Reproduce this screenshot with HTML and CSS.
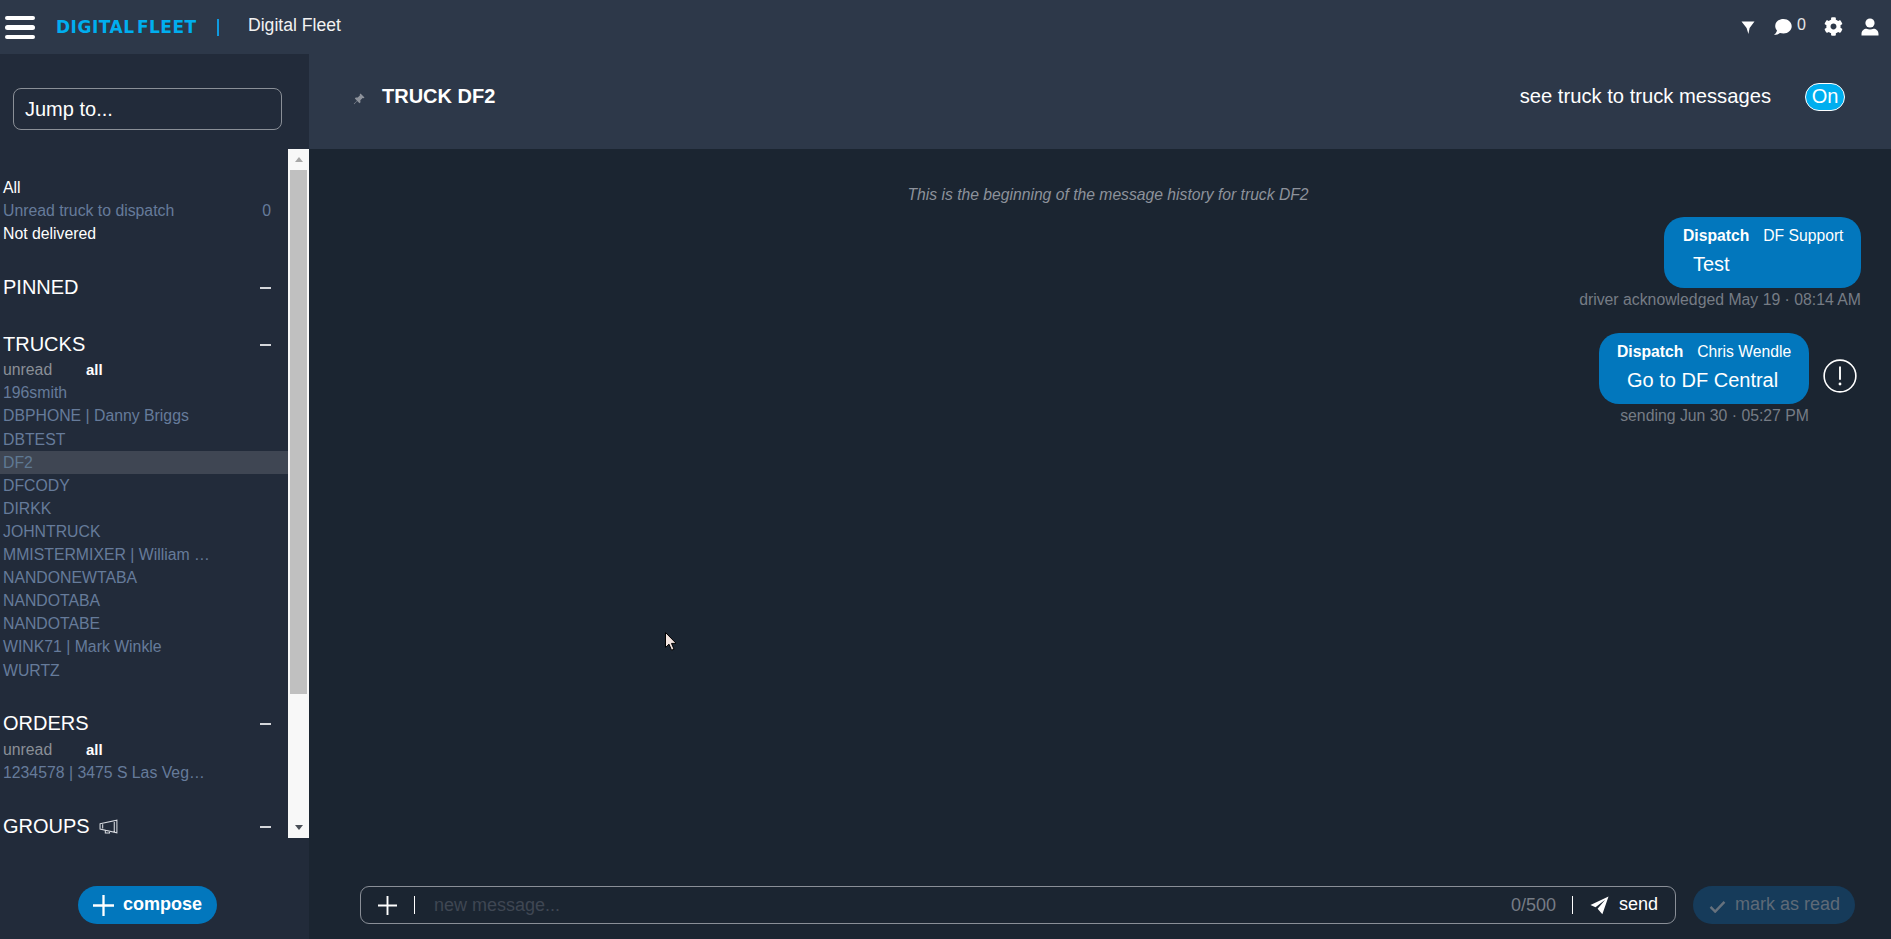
FILE: index.html
```html
<!DOCTYPE html>
<html lang="en">
<head>
<meta charset="utf-8">
<title>Digital Fleet</title>
<link rel="stylesheet" href="styles.css">
</head>
<body>
<header class="topbar">
  <div class="burger"><span></span><span></span><span></span></div>
  <div class="logo">DIGITAL FLEET</div>
  <div class="logo-sep"></div>
  <div class="app-name">Digital Fleet</div>
  <div class="top-icons">
    <svg class="ic-filter" viewBox="0 0 14 14"><path d="M0.500 1h13L8.600 7.400 7.400 13.600 5.600 7.400z" fill="#fff"/></svg>
    <svg class="ic-chat" viewBox="0 0 20 18"><path d="M10.500 1C5.800 1 2.200 4 2.200 8c0 1.800.7 3.300 1.800 4.500C3.600 14.200 2.400 15.800 1 17c2.400 0 4.600-.9 6-2 1 .3 2.200.5 3.500.5 4.600 0 8.200-3.200 8.200-7.200S15.100 1 10.500 1z" fill="#fff"/></svg>
    <span class="chat-count">0</span>
    <svg class="ic-gear" viewBox="0 0 512 512"><path fill="#fff" d="M487 316l-43-25c4-23 4-47 0-70l43-25c5-3 7-9 6-14-11-36-30-68-55-95-4-4-10-5-15-2l-43 25c-18-16-39-28-61-36V24c0-6-4-11-9-12-37-8-75-8-110 0-5 1-9 6-9 12v50c-22 8-43 20-61 36L87 85c-5-3-11-2-15 2-25 27-44 59-55 95-2 5 1 11 6 14l43 25c-4 23-4 47 0 70l-43 25c-5 3-7 9-6 14 11 36 30 68 55 95 4 4 10 5 15 2l43-25c18 16 39 28 61 36v50c0 6 4 11 9 12 37 8 75 8 110 0 5-1 9-6 9-12v-50c22-8 43-20 61-36l43 25c5 3 11 2 15-2 25-27 44-59 55-95 2-5-1-11-6-14zM256 336c-44 0-80-36-80-80s36-80 80-80 80 36 80 80-36 80-80 80z"/></svg>
    <svg class="ic-user" viewBox="0 0 18 18"><circle cx="9" cy="5" r="4.600" fill="#fff"/><path d="M0.500 17.500v-1.600C0.500 12.800 3 10.800 5.500 10.800c1 .5 2.200.8 3.500.8s2.500-.3 3.500-.8c2.500 0 5 2 5 5.100v1.600z" fill="#fff"/></svg>
  </div>
</header>
<div class="body-row">
  <aside class="sidebar">
    <div class="jump-wrap"><div class="jump">Jump to...</div></div>
    <div class="list-wrap">
      <div class="list">
        <div class="row white">All</div>
        <div class="row muted split"><span>Unread truck to dispatch</span><span>0</span></div>
        <div class="row white">Not delivered</div>

        <div class="section pinned"><span>PINNED</span><span class="dash"></span></div>

        <div class="section trucks"><span>TRUCKS</span><span class="dash"></span></div>
        <div class="row tabs"><span class="tab-off">unread</span><span class="tab-on">all</span></div>
        <div class="row muted">196smith</div>
        <div class="row muted">DBPHONE | Danny Briggs</div>
        <div class="row muted">DBTEST</div>
        <div class="row muted active">DF2</div>
        <div class="row muted">DFCODY</div>
        <div class="row muted">DIRKK</div>
        <div class="row muted">JOHNTRUCK</div>
        <div class="row muted">MMISTERMIXER | William …</div>
        <div class="row muted">NANDONEWTABA</div>
        <div class="row muted">NANDOTABA</div>
        <div class="row muted">NANDOTABE</div>
        <div class="row muted">WINK71 | Mark Winkle</div>
        <div class="row muted">WURTZ</div>

        <div class="section orders"><span>ORDERS</span><span class="dash"></span></div>
        <div class="row tabs"><span class="tab-off">unread</span><span class="tab-on">all</span></div>
        <div class="row muted">1234578 | 3475 S Las Veg…</div>

        <div class="section groups"><span class="group-label">GROUPS
          <svg class="ic-horn" viewBox="0 0 19 15"><path d="M1 4.500l16-3.500v12L1 9.500zM3.500 5v4M14.500 1.500v11M6 10.200v3h4v-2.200" fill="none" stroke="#d8dbe0" stroke-width="1"/></svg></span><span class="dash"></span></div>
      </div>
      <div class="scrollbar">
        <div class="arrow-up"></div>
        <div class="thumb"></div>
        <div class="arrow-down"></div>
      </div>
    </div>
    <div class="compose-wrap">
      <div class="compose">
        <svg class="ic-plus-lg" viewBox="0 0 22 22"><path d="M11 0v22M0 11h22" stroke="#fff" stroke-width="2.400"/></svg>
        <span>compose</span>
      </div>
    </div>
  </aside>
  <main class="main">
    <div class="main-head">
      <svg class="ic-pin" viewBox="0 0 12 12"><path d="M7.500 0.500l4 4-1 .8-.9-.3-2.300 2.300.2 2-1 .9L4.200 7.900 1.200 11.200 0.800 10.800 4 7.700 1.800 5.400l.9-1 2 .2L7 2.300l-.3-.9z" fill="#8d929b"/></svg>
      <h1 class="truck-title">TRUCK DF2</h1>
      <div class="see-label">see truck to truck messages</div>
      <div class="toggle">On</div>
    </div>
    <div class="history">
      <div class="history-note">This is the beginning of the message history for truck DF2</div>
      <div class="msg first">
        <div class="msg-main">
          <div class="bubble b1">
            <div class="b-head"><b>Dispatch</b><span>DF Support</span></div>
            <div class="b-text t1">Test</div>
          </div>
          <div class="meta">driver acknowledged May 19 · 08:14 AM</div>
        </div>
      </div>
      <div class="msg second">
        <div class="msg-main">
          <div class="bubble b2">
            <div class="b-head"><b>Dispatch</b><span>Chris Wendle</span></div>
            <div class="b-text t2">Go to DF Central</div>
          </div>
          <div class="meta">sending Jun 30 · 05:27 PM</div>
        </div>
        <svg class="ic-alert" viewBox="0 0 36 36"><circle cx="18" cy="18" r="16.800" fill="none" stroke="#fff" stroke-width="1.700"/><path d="M18 8v14" stroke="#fff" stroke-width="2"/><circle cx="18" cy="26.500" r="1.500" fill="#fff"/></svg>
      </div>
    </div>
    <div class="composer">
      <div class="input-box">
        <svg class="ic-plus" viewBox="0 0 20 20"><path d="M10 0v20M0 10h20" stroke="#fff" stroke-width="2"/></svg>
        <span class="vbar first-bar"></span>
        <span class="placeholder">new message...</span>
        <span class="counter">0/500</span>
        <span class="vbar"></span>
        <svg class="ic-send" viewBox="0 0 20 20"><path d="M19.500 0.500L0.500 9.500l5.300 2.400L16 4 8 13.500l5 5.800z" fill="#fff"/></svg>
        <span class="send-label">send</span>
      </div>
      <div class="mark-read">
        <svg class="ic-check" viewBox="0 0 18 14"><path d="M1.500 7.500l5 5L16.500 2" fill="none" stroke="#66717d" stroke-width="2.600"/></svg>
        <span>mark as read</span>
      </div>
    </div>
  </main>
</div>
<svg class="cursor" viewBox="0 0 11 19"><path d="M0.500 0.500v15l3.500-3.300 2.500 6 2.500-1-2.500-5.800h4.700z" fill="#f2e4df" stroke="#000" stroke-width="1"/></svg>
</body>
</html>
```

FILE: styles.css
```css
* { box-sizing: border-box; }
html, body { height: 100%; }
body {
  margin: 0;
  height: 939px;
  width: 1891px;
  overflow: hidden;
  display: flex;
  flex-direction: column;
  position: relative;
  font-family: "Liberation Sans", Arial, sans-serif;
  color: #fff;
  background: #1b2531;
}

/* top bar */
.topbar {
  flex: 0 0 54px;
  height: 54px;
  background: #2d3849;
  display: flex;
  align-items: center;
  padding-left: 5px;
}
.burger { width: 30px; display: flex; flex-direction: column; gap: 5px; margin-top: 1px; }
.burger span { display: block; height: 4.500px; background: #fff; border-radius: 3px; }
.logo {
  margin-left: 21px;
  width: 141px;
  font-weight: 700;
  font-size: 17px;
  font-family: "DejaVu Sans", sans-serif;
  color: #00aeef;
  white-space: nowrap;
  letter-spacing: 0.5px;
  word-spacing: -4px;
}
.logo-sep { width: 2px; height: 17px; background: #0f9be0; margin-left: 20px; }
.app-name { margin-left: 29px; font-size: 17.600px; color: #f2f2f2; margin-top: -3px; }
.top-icons { margin-left: auto; display: flex; align-items: center; padding-right: 12px; margin-top: -1px; }
.ic-filter { width: 14px; height: 15px; margin-right: 18px; margin-top: 1px; }
.ic-chat { width: 20px; height: 18px; }
.chat-count { font-size: 16px; margin-left: 4px; margin-top: -3px; color: #e6e6e6; width: 9px; }
.ic-gear { width: 19px; height: 19px; margin-left: 18px; }
.ic-user { width: 18px; height: 18px; margin-left: 18px; }

.body-row { flex: 1; display: flex; min-height: 0; }

/* sidebar */
.sidebar {
  flex: 0 0 309px;
  width: 309px;
  background: #222b3a;
  display: flex;
  flex-direction: column;
}
.jump-wrap { height: 95px; padding: 34px 27px 0 13px; }
.jump {
  height: 42px;
  border: 1px solid #8a8f97;
  border-radius: 8px;
  padding-left: 11px;
  line-height: 40px;
  font-size: 20px;
}
.list-wrap { height: 689px; display: flex; }
.list { flex: 1; min-width: 0; padding-top: 27px; overflow: hidden; }
.row {
  height: 23.100px;
  line-height: 23px;
  font-size: 15.800px;
  padding-left: 3px;
  white-space: nowrap;
}
.white { color: #fff; }
.muted { color: #667b9a; }
.split { display: flex; justify-content: space-between; padding-right: 17px; }
.active { background: #3f4653; color: #5f7993; }
.tabs { display: flex; }
.tab-off { color: #8a8f97; width: 83px; }
.tab-on { color: #fff; font-weight: 700; font-size: 15px; }
.section {
  display: flex;
  justify-content: space-between;
  align-items: center;
  font-size: 20px;
  height: 24px;
  line-height: 24px;
  padding: 0 17px 0 3px;
  color: #fff;
}
.pinned { margin-top: 30px; margin-bottom: 33px; }
.trucks { margin-bottom: 2px; }
.orders { margin-top: 29px; margin-bottom: 3px; }
.groups { margin-top: 30px; }
.dash { display: block; width: 11px; height: 2px; background: #d4d6da; margin-top: 2px; }
.group-label { display: flex; align-items: center; gap: 9px; }
.ic-horn { width: 20px; height: 16px; margin-top: 2px; }

.scrollbar {
  flex: 0 0 21px;
  width: 21px;
  background: #f8f8f8;
  display: flex;
  flex-direction: column;
  align-items: center;
  padding: 0 2px;
}
.arrow-up {
  margin-top: 8px;
  margin-bottom: 8px;
  border-left: 4.500px solid transparent;
  border-right: 4.500px solid transparent;
  border-bottom: 5px solid #a8a8a8;
}
.thumb { width: 17px; height: 524px; background: #c0c0c0; }
.arrow-down {
  margin-top: auto;
  margin-bottom: 8px;
  border-left: 4.500px solid transparent;
  border-right: 4.500px solid transparent;
  border-top: 5px solid #4a4f57;
}
.compose-wrap { flex: 1; display: flex; justify-content: center; padding-top: 48px; padding-right: 14px; }
.compose {
  height: 38px;
  width: 139px;
  border-radius: 19px;
  background: #0277bd;
  display: flex;
  align-items: center;
  padding-left: 15px;
  gap: 9px;
  font-weight: 700;
  font-size: 18px;
}
.compose span { margin-top: -2px; }
.ic-plus-lg { width: 21px; height: 21px; }

/* main */
.main { flex: 1; min-width: 0; display: flex; flex-direction: column; }
.main-head {
  flex: 0 0 95px;
  height: 95px;
  background: #2d3849;
  display: flex;
  align-items: center;
  padding-left: 44px;
  padding-right: 46px;
  padding-bottom: 10px;
}
.ic-pin { width: 12px; height: 12px; margin-top: 4px; }
.truck-title { margin: 0 0 0 17px; font-size: 20px; font-weight: 700; color: #fff; line-height: 1; margin-top: -2px; }
.see-label { margin-left: auto; font-size: 20.200px; margin-top: -1px; }
.toggle {
  margin-left: 34px;
  width: 40px;
  height: 28px;
  border-radius: 14px;
  background: #00aeef;
  border: 1px solid #fff;
  font-size: 20px;
  line-height: 25px;
  text-align: center;
  margin-top: -1px;
  position: relative;
  top: 1px;
}
.history { flex: 1; min-height: 0; display: flex; flex-direction: column; padding-right: 30px; }
.history-note {
  text-align: center;
  font-style: italic;
  font-size: 15.700px;
  line-height: 18px;
  color: #8d929b;
  padding-top: 30px;
  padding-left: 46px;
  height: 68px;
  margin-top: 7px;
}
.msg { display: flex; justify-content: flex-end; }
.msg.first { margin-top: -7px; }
.msg.second { margin-top: 24px; margin-right: 4px; }
.msg-main { display: flex; flex-direction: column; align-items: flex-end; }
.bubble {
  background: #0277bd;
  border-radius: 20px;
  height: 71px;
  padding-top: 10px;
}
.b1 { width: 197px; padding-left: 19px; }
.b2 { width: 210px; padding-left: 18px; }
.b-head { font-size: 15.700px; line-height: 18px; display: flex; gap: 14px; white-space: nowrap; }
.b-text { font-size: 20px; line-height: 23px; margin-top: 8px; }
.t1 { padding-left: 10px; }
.t2 { padding-left: 10px; }
.meta { font-size: 15.800px; color: #767c85; line-height: 18px; margin-top: 3px; white-space: nowrap; }
.ic-alert { width: 34px; height: 34px; margin-left: 14px; margin-top: 26px; }

.composer { flex: 0 0 66px; height: 66px; display: flex; padding-left: 51px; padding-top: 13px; }
.input-box {
  width: 1316px;
  height: 38px;
  border: 1px solid #8a8f97;
  border-radius: 9px;
  display: flex;
  align-items: center;
  padding-left: 17px;
  font-size: 18px;
}
.ic-plus { width: 19px; height: 19px; }
.vbar { display: block; width: 1px; height: 18px; background: #fff; }
.first-bar { margin-left: 17px; }
.placeholder { margin-left: 19px; color: #3f4753; }
.counter { margin-left: auto; color: #767c85; }
.counter + .vbar { margin-left: 16px; }
.ic-send { width: 19px; height: 19px; margin-left: 17px; }
.send-label { margin-left: 10px; margin-right: 17px; font-size: 18px; margin-top: -2px; }
.mark-read {
  margin-left: 17px;
  width: 162px;
  height: 38px;
  border-radius: 19px;
  background: #163b5a;
  color: #5e6a77;
  display: flex;
  align-items: center;
  padding-left: 16px;
  gap: 9px;
  font-size: 18px;
}
.mark-read span { margin-top: -2px; }
.ic-check { width: 17px; height: 13px; margin-top: 3px; }

.cursor { position: absolute; left: 665px; top: 632px; width: 11px; height: 19px; }
```
